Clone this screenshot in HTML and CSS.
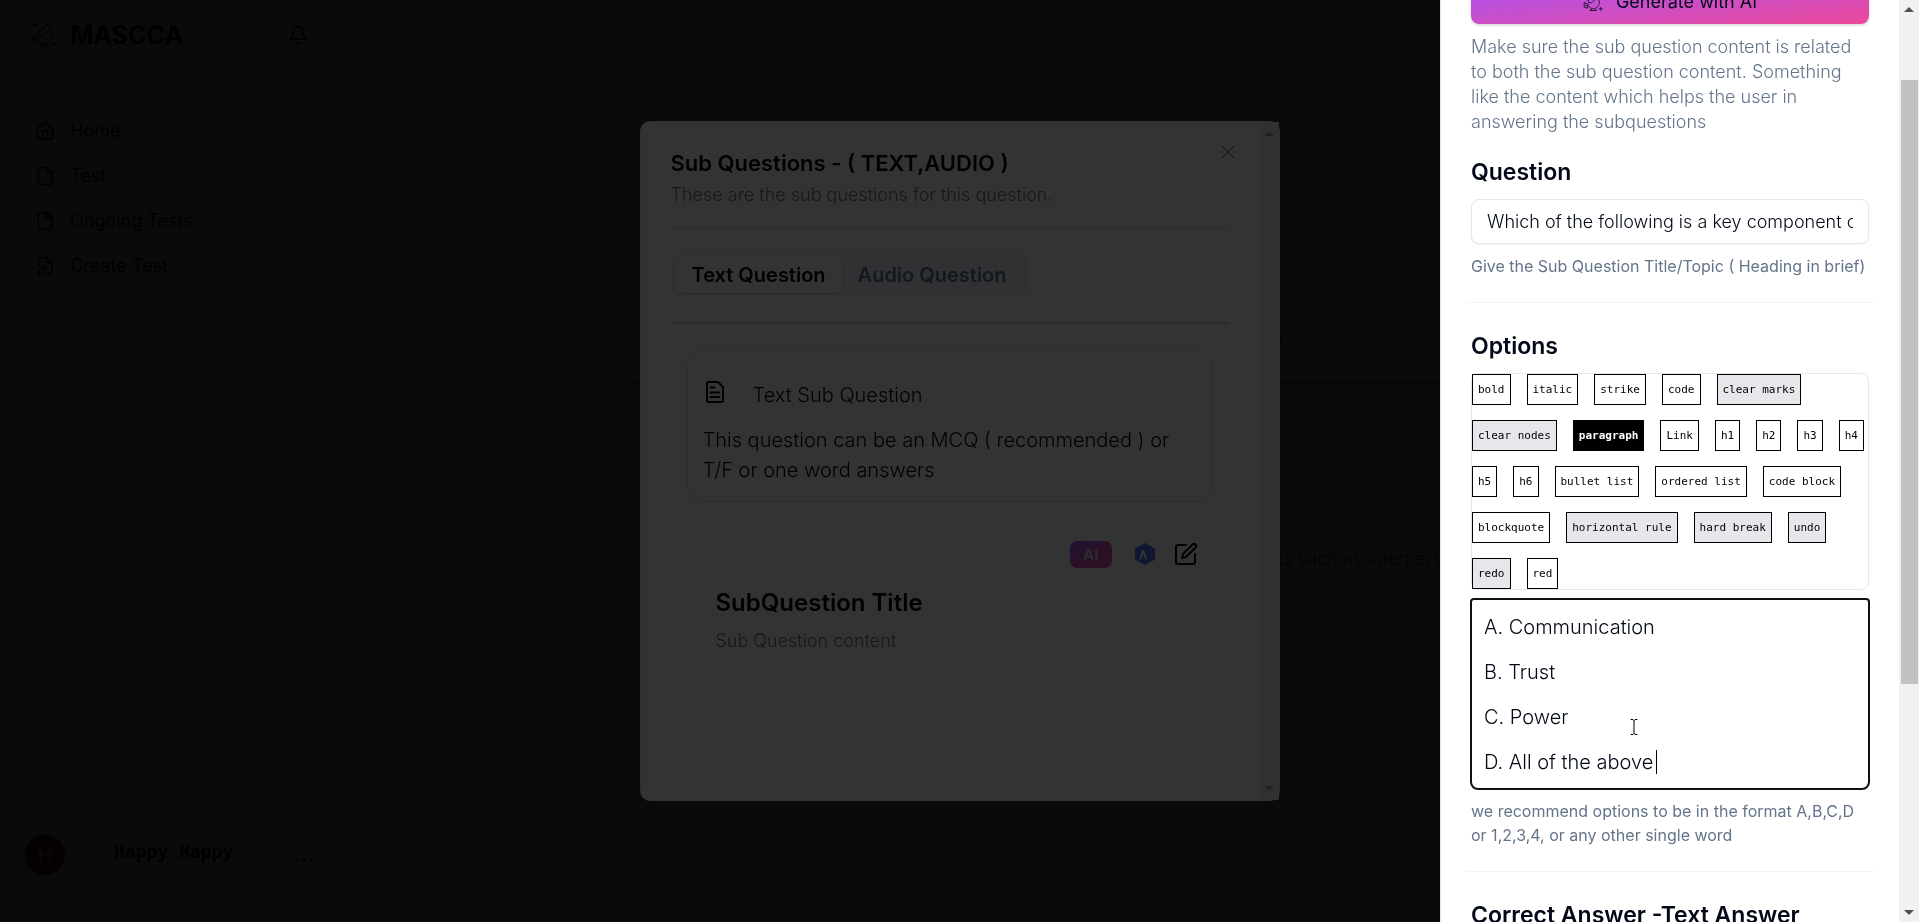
FILE: index.html
```html
<!DOCTYPE html>
<html lang="en">
<head>
  <meta charset="UTF-8" />
  <meta name="viewport" content="width=device-width, initial-scale=1.0"/>
  <title>MASCCA - Create Test</title>
  <link rel="stylesheet" href="styles.css">
</head>
<body>

  <svg class="defs" aria-hidden="true">
    <symbol id="logo" viewBox="0 0 26 26">
      <path d="M7 10l9-7 3-1 1 2-1 3-8 7-3 0zM16 3l3 4M20 9c2 4 2 8-2 11-4 3-8 2-10-1M2 14l5 2-1 5-4-1zM3 17l3 1M9 24h8M11 22l-1 2M16 22l1 2M4 1v4M2 3h4M23 20v4M21 22h4"/>
    </symbol>
    <symbol id="file" viewBox="0 0 24 24">
      <path d="M14.5 2H6a2 2 0 0 0-2 2v16a2 2 0 0 0 2 2h12a2 2 0 0 0 2-2V7.500z"/>
      <path d="M14 2v6h6"/>
    </symbol>
  </svg>

  <div class="app">
    <aside class="sidebar">
      <div class="brand">
        <svg class="logo"><use href="#logo"/></svg>
        <span class="brand-name">MASCCA</span>
        <button class="bell" aria-label="Notifications">
          <svg class="icon" viewBox="0 0 24 24"><path d="M6 8a6 6 0 0 1 12 0c0 7 3 9 3 9H3s3-2 3-9M10.300 21a1.940 1.940 0 0 0 3.400 0"/></svg>
        </button>
      </div>
      <nav class="nav">
        <a href="#"><svg class="icon" viewBox="0 0 24 24"><path d="M3 9l9-7 9 7v11a2 2 0 0 1-2 2H5a2 2 0 0 1-2-2zM9 22V12h6v10"/></svg>Home</a>
        <a href="#"><svg class="icon"><use href="#file"/></svg>Test</a>
        <a href="#"><svg class="icon"><use href="#file"/></svg>Ongoing Tests</a>
        <a href="#"><svg class="icon" viewBox="0 0 24 24"><path d="M4 12V4a2 2 0 0 1 2-2h8.500L20 7.500V20a2 2 0 0 1-2 2h-5M14 2v6h6M10.400 12.600a2 2 0 1 1 3 3L8 21l-4 1 1-4z"/></svg>Create Test</a>
      </nav>
      <div class="user">
        <span class="avatar">H</span>
        <span class="user-name">Happy Happy</span>
        <button class="more" aria-label="More">...</button>
      </div>
    </aside>
    <main class="main">
      <div class="page">
        <div class="page-head"></div>
        <div class="page-body">
          <div class="box box-small"></div>
          <div class="box box-large">
            <h2 class="box-title">s</h2>
            <p class="box-text">ts such as interpers</p>
          </div>
        </div>
      </div>
    </main>
  </div>

  <div class="overlay">
    <section class="modal" role="dialog" aria-labelledby="modal-title">
      <div class="modal-body">
        <button class="close" aria-label="Close">
          <svg viewBox="0 0 14 14"><path d="M1 1l12 12M13 1L1 13"/></svg>
        </button>
        <h2 class="modal-title" id="modal-title">Sub Questions - ( TEXT,AUDIO )</h2>
        <p class="modal-desc">These are the sub questions for this question.</p>
        <hr class="line">
        <div class="tabs">
          <button class="tab tab-active">Text Question</button>
          <button class="tab">Audio Question</button>
        </div>
        <hr class="line line-thick">
        <div class="card">
          <div class="card-head">
            <svg class="icon-lg" viewBox="0 0 24 24"><path d="M15 2H5.500A1.500 1.500 0 0 0 4 3.500v17A1.500 1.500 0 0 0 5.500 22h13a1.500 1.500 0 0 0 1.500-1.500V7zM7.500 7.500h4M7.500 12.500h9M7.500 17h9"/></svg>
            <span>Text Sub Question</span>
          </div>
          <p>This question can be an MCQ ( recommended ) or T/F or one word answers</p>
        </div>
        <div class="actions">
          <button class="ai">AI</button>
          <svg class="hex" viewBox="0 0 22 24"><path class="hex-bg" d="M11 1l10 5.500v11L11 23 1 17.500v-11z"/><path class="hex-mark" d="M6.500 16.500L9 8.500l3 8"/></svg>
          <button class="edit" aria-label="Edit">
            <svg class="icon-lg" viewBox="0 0 24 24"><path d="M12 3H4a2 2 0 0 0-2 2v15a2 2 0 0 0 2 2h15a2 2 0 0 0 2-2v-8M18.500 2.500a2.100 2.100 0 0 1 3 3L12 15l-4 1 1-4z"/></svg>
          </button>
        </div>
        <div class="sub">
          <h3>SubQuestion Title</h3>
          <p>Sub Question content</p>
        </div>
      </div>
      <div class="bar bar-modal"><i class="up"></i><i class="down"></i></div>
    </section>
  </div>

  <div class="overlay overlay-top">
    <section class="sheet" role="dialog" aria-label="Text sub question">
      <form class="sheet-body">
        <button type="button" class="generate">
          <svg class="logo"><use href="#logo"/></svg>Generate with AI
        </button>
        <p class="note">Make sure the sub question content is related to both the sub question content. Something like the content which helps the user in answering the subquestions</p>

        <label class="label" for="question">Question</label>
        <input class="field" type="text" id="question" value="Which of the following is a key component of effective leadership?">
        <p class="hint">Give the Sub Question Title/Topic ( Heading in brief)</p>
        <hr class="split">

        <label class="label" for="options">Options</label>
        <div class="toolbar">
          <button type="button">bold</button>
          <button type="button">italic</button>
          <button type="button">strike</button>
          <button type="button">code</button>
          <button type="button" class="gray">clear marks</button>
          <button type="button" class="gray">clear nodes</button>
          <button type="button" class="active">paragraph</button>
          <button type="button">Link</button>
          <button type="button">h1</button>
          <button type="button">h2</button>
          <button type="button">h3</button>
          <button type="button">h4</button>
          <button type="button">h5</button>
          <button type="button">h6</button>
          <button type="button">bullet list</button>
          <button type="button">ordered list</button>
          <button type="button">code block</button>
          <button type="button">blockquote</button>
          <button type="button" class="gray">horizontal rule</button>
          <button type="button" class="gray">hard break</button>
          <button type="button" class="gray">undo</button>
          <button type="button" class="gray">redo</button>
          <button type="button">red</button>
        </div>
        <div class="editor">
          <textarea id="options" rows="4">A. Communication
B. Trust
C. Power
D. All of the above</textarea>
          <span class="caret"></span>
          <svg class="pointer" viewBox="0 0 8 16"><path d="M1 .5h2l1 1 1-1h2M4 1.500v13M1 15.500h2l1-1 1 1h2"/></svg>
        </div>
        <p class="hint">we recommend options to be in the format A,B,C,D or 1,2,3,4, or any other single word</p>
        <hr class="split">

        <h3 class="label">Correct Answer -Text Answer</h3>
      </form>
      <div class="bar"><i class="up"></i><i class="thumb"></i><i class="down"></i></div>
    </section>
  </div>

</body>
</html>
```
FILE: styles.css
```css
* {
  box-sizing: border-box;
}
body {
  margin: 0;
  height: 100vh;
  overflow: hidden;
  font-family: Inter, sans-serif;
  font-weight: 300;
  font-size: 20px;
  line-height: 30px;
  color: #020817;
  background-color: white;
}
h2, h3, p {
  margin: 0;
}
button {
  font: inherit;
  color: inherit;
  background: none;
  border: none;
  padding: 0;
}
svg {
  fill: none;
  stroke: currentColor;
  stroke-width: 2;
  stroke-linecap: round;
  stroke-linejoin: round;
  flex: none;
}
.defs {
  position: absolute;
  width: 0;
  height: 0;
}
.icon {
  width: 20px;
  height: 20px;
}
.icon-lg {
  width: 24px;
  height: 24px;
}
.logo {
  width: 26px;
  height: 26px;
  stroke-width: 1;
}

/* page behind the dialogs */
.app {
  display: flex;
  height: 100vh;
  color: black;
}
.sidebar {
  width: 350px;
  display: flex;
  flex-direction: column;
  border-right: 1px solid #e5e7eb;
}
.brand {
  display: flex;
  align-items: center;
  height: 98px;
  padding: 0 31px 28px;
  border-bottom: 1px solid #ccc;
}
.brand-name {
  margin-left: 13px;
  font-size: 25px;
  font-weight: 700;
}
.bell {
  display: flex;
  align-items: center;
  justify-content: center;
  width: 40px;
  height: 40px;
  margin-left: auto;
  border: 1px solid #ccc;
  border-radius: 8px;
}
.nav {
  display: flex;
  flex-direction: column;
  padding: 10px 35px;
}
.nav a {
  display: flex;
  align-items: center;
  gap: 15px;
  height: 45px;
  font-size: 18px;
  font-weight: 400;
  color: black;
  text-decoration: none;
}
.user {
  display: flex;
  align-items: center;
  margin-top: auto;
  height: 113px;
  padding: 0 25px 22px;
  border-top: 1px solid #ccc;
}
.avatar {
  width: 40px;
  height: 40px;
  line-height: 40px;
  text-align: center;
  color: white;
  border-radius: 50%;
  background-color: #7b0040;
}
.user-name {
  margin: 0 auto 6px 49px;
  font-family: "DejaVu Sans Mono", monospace;
  font-size: 18px;
  font-weight: 700;
}
.more {
  width: 40px;
  height: 40px;
  font-weight: 600;
}
.main {
  flex: 1;
  padding: 30px 30px 26px;
  border-top: 98px solid #f5f5f5;
}
.page {
  height: 100%;
  border: 1px solid #ddd;
  border-radius: 10px;
}
.page-head {
  height: 92px;
  border-bottom: 2px solid #ccc;
}
.page-body {
  padding: 3px 0 0 237px;
}
.box {
  border: 1px solid #ccc;
}
.box-small {
  height: 54px;
}
.box-large {
  height: 536px;
  margin-top: 22px;
  padding: 24px 15px;
}
.box-title {
  padding: 0 0 25px 637px;
  font-size: 20px;
  border-bottom: 4px solid #999;
}
.box-text {
  padding: 160px 0 0 644px;
  font-size: 18px;
  color: #333;
}

/* dialogs */
.overlay {
  position: fixed;
  inset: 0;
  display: flex;
  align-items: center;
  justify-content: center;
  background-color: rgba(0, 0, 0, 0.8);
}
.overlay-top {
  justify-content: flex-end;
  align-items: stretch;
}
.modal {
  display: flex;
  width: 640px;
  height: calc(74vh - 2px);
  background-color: white;
  border: 1px solid #e2e8f0;
  border-radius: 10px;
}
.modal-body {
  position: relative;
  flex: 1;
  padding: 29px 30px 30px;
}
.close {
  position: absolute;
  top: 23px;
  right: 24px;
  display: flex;
  opacity: 0.7;
}
.close svg {
  width: 14px;
  height: 14px;
  stroke-width: 1;
}
.modal-title {
  font-size: 22px;
  line-height: 24px;
  font-weight: 600;
}
.modal-desc {
  margin: 7px 0 20px;
  font-size: 18px;
  line-height: 25px;
  color: #64748b;
}
.line {
  margin: 0;
  border: none;
  border-top: 1px solid #cbd0d8;
}
.line-thick {
  border-top: 2px solid #cbd0d8;
}
.tabs {
  display: flex;
  width: fit-content;
  margin: 25px 0;
  padding: 4px 5px;
  border-radius: 10px;
  background-color: #f1f5f9;
}
.tab {
  padding: 3px 16px;
  font-weight: 600;
  color: #64748b;
  border-radius: 6px;
}
.tab-active {
  color: #020817;
  background-color: white;
  box-shadow: 0 1px 3px rgba(0, 0, 0, 0.2);
}
.card {
  margin: 25px 16px 40px;
  padding: 30px 15px 15px;
  border: 1px solid #e2e8f0;
  border-radius: 15px;
  box-shadow: 0 1px 2px rgba(0, 0, 0, 0.1);
}
.card-head {
  display: flex;
  gap: 26px;
  margin-bottom: 15px;
}
.actions {
  display: flex;
  align-items: center;
  justify-content: flex-end;
  gap: 18px;
  padding-right: 31px;
}
.ai {
  margin-right: 4px;
  padding: 0 13px;
  font-size: 15px;
  line-height: 27px;
  font-weight: 700;
  color: #ddd;
  border-radius: 7px;
  background: linear-gradient(to bottom right, #a855f7, #ec4899);
}
.hex {
  width: 22px;
  height: 24px;
}
.hex-bg {
  fill: #4f6bed;
  stroke: none;
}
.hex-mark {
  stroke: white;
}
.edit {
  display: flex;
}
.sub {
  padding: 20px 45px;
}
.sub h3 {
  font-size: 24px;
  font-weight: 600;
}
.sub p {
  margin-top: 10px;
  font-size: 18px;
  line-height: 25px;
  color: #64748b;
}

/* right sheet */
.sheet {
  display: flex;
  width: 479px;
  overflow: hidden;
  background-color: white;
  border-left: 1px solid #e2e8f0;
}
.sheet-body {
  flex: 1;
  min-width: 0;
  margin-top: -21px;
  padding: 0 30px;
}
.generate {
  display: flex;
  align-items: center;
  justify-content: center;
  gap: 13px;
  width: 100%;
  height: 45px;
  font-size: 18px;
  font-weight: 400;
  border-radius: 8px;
  background: linear-gradient(to bottom right, #a855f7, #ec4899);
  box-shadow: 0 1px 3px rgba(0, 0, 0, 0.2);
}
.generate .logo {
  width: 20px;
  height: 20px;
}
.note {
  margin: 10px 0 23px;
  font-size: 18px;
  line-height: 25px;
  color: #64748b;
}
.label {
  display: block;
  font-size: 23px;
  font-weight: 600;
}
.field {
  display: block;
  width: 100%;
  height: 45px;
  margin: 12px 0 10px;
  padding: 0 15px;
  font: inherit;
  font-size: 18px;
  color: inherit;
  border: 1px solid #e2e8f0;
  border-radius: 8px;
  box-shadow: 0 1px 2px rgba(0, 0, 0, 0.05);
}
.hint {
  font-size: 16px;
  line-height: 24px;
  font-weight: 400;
  color: #64748b;
}
.split {
  margin: 24px -5px 28px;
  border: none;
  border-top: 1px solid #f1f5f9;
}
.toolbar {
  display: flex;
  flex-wrap: wrap;
  gap: 15px 16px;
  margin: 12px 0 8px;
  border: 1px solid #e2e8f0;
  border-radius: 8px;
}
.toolbar button {
  height: 31px;
  padding: 0 5px;
  font-family: "DejaVu Sans Mono", monospace;
  font-size: 11px;
  font-weight: 400;
  color: black;
  background-color: white;
  border: 1px solid black;
}
.toolbar .gray {
  background-color: #e5e7eb;
}
.toolbar .active {
  color: white;
  font-weight: 700;
  background-color: black;
}
.editor {
  position: relative;
  margin: 0 -1px 9px;
}
.editor textarea {
  display: block;
  width: 100%;
  height: 192px;
  padding: 5px 12px;
  font: inherit;
  line-height: 45px;
  color: inherit;
  border: 2px solid #101010;
  border-radius: 4px 4px 8px 8px;
  outline: none;
  resize: none;
  overflow: hidden;
}
.caret {
  position: absolute;
  left: 186px;
  top: 152px;
  width: 1px;
  height: 24px;
  background-color: black;
}
.pointer {
  position: absolute;
  left: 160px;
  top: 121px;
  width: 8px;
  height: 16px;
  color: black;
  stroke-width: 1;
}

/* scrollbars */
.bar {
  display: flex;
  flex-direction: column;
  align-items: center;
  width: 20px;
  background-color: #f1f1f1;
}
.bar-modal {
  background-color: #f5f5f5;
}
.up, .down {
  border: 5px solid transparent;
}
.up {
  margin-top: 2px;
  border-bottom-color: #505050;
}
.down {
  margin: auto 0 2px;
  border-top-color: #505050;
}
.bar-modal .up {
  margin-top: 4px;
  border-bottom-color: #aaa;
}
.bar-modal .down {
  margin-bottom: 4px;
  border-top-color: #aaa;
}
.thumb {
  width: 17px;
  height: 604px;
  margin-top: 68px;
  background-color: #c1c1c1;
}
```
